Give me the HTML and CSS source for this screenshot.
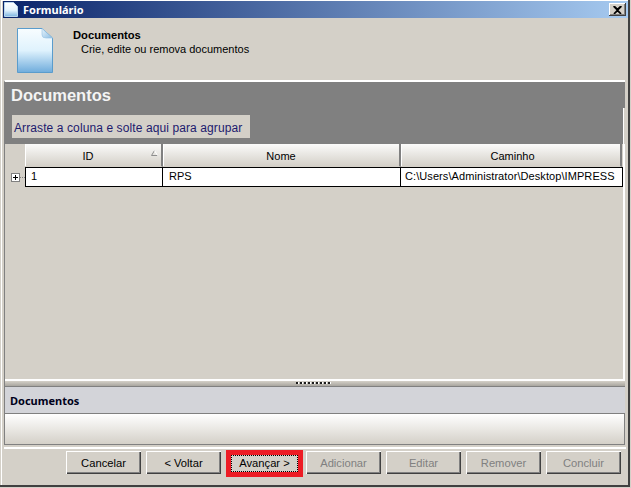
FILE: index.html
```html
<!DOCTYPE html>
<html lang="pt">
<head>
<meta charset="utf-8">
<title>Formulário</title>
<link rel="stylesheet" href="styles.css">
</head>
<body>
<div class="window">
  <div class="titlebar">
    <svg class="title-icon" width="14" height="15" viewBox="0 0 14 15"><defs><linearGradient id="tg" x1="0" y1="0" x2="0" y2="1"><stop offset="0" stop-color="#fff"/><stop offset=".55" stop-color="#e4f3fd"/><stop offset="1" stop-color="#7db4e0"/></linearGradient></defs><path d="M.5.5H9.5L13.5 4.5V14.5H.5Z" fill="url(#tg)" stroke="#b9d6ee"/></svg>
    <span class="title-text">Formulário</span>
    <span class="close"><svg width="9" height="8" viewBox="0 0 9 8"><path d="M1 0L4.5 3.2L8 0M1 8L4.5 4.8L8 8M.5.2L8 7.8M8.5.2L1 7.8" fill="none" stroke="#000" stroke-width="1.5"/></svg></span>
  </div>
  <div class="banner">
    <svg class="banner-icon" width="36" height="45" viewBox="0 0 36 45"><defs><linearGradient id="bg" x1="0" y1="0" x2="0" y2="1"><stop offset="0" stop-color="#f8fdff"/><stop offset=".5" stop-color="#dff2fd"/><stop offset="1" stop-color="#6facdc"/></linearGradient><linearGradient id="fg" x1="0" y1="0" x2="1" y2="1"><stop offset="0" stop-color="#e8f5fd"/><stop offset="1" stop-color="#8dbde2"/></linearGradient></defs><path d="M.5.5H25L35.5 10V44.5H.5Z" fill="url(#bg)" stroke="#5a9ccc"/><path d="M25 .5V7Q25 10 29 10H35.5Z" fill="url(#fg)" stroke="#93c1e3" stroke-width=".6"/></svg>
    <div class="banner-text">
      <div class="banner-title">Documentos</div>
      <div class="banner-sub">Crie, edite ou remova documentos</div>
    </div>
  </div>
  <div class="panel">
    <div class="grid-head">
      <h1 class="grid-title">Documentos</h1>
      <div class="group-box">Arraste a coluna e solte aqui para agrupar</div>
    </div>
    <div class="grid-body">
      <div class="row-head">
        <div class="col col-id head">ID<svg class="sort" width="7" height="6" viewBox="0 0 7 6"><path d="M3.5.5L.5 5.5H6.5" fill="none" stroke="#8e8e8e"/><path d="M3.5.5L6.5 5.5" fill="none" stroke="#fff"/></svg></div>
        <div class="col col-name head">Nome</div>
        <div class="col col-path head">Caminho</div>
      </div>
      <div class="row-data">
        <span class="expander"><svg width="9" height="9" viewBox="0 0 9 9"><rect x=".5" y=".5" width="8" height="8" fill="#fff" stroke="#808080"/><path d="M2 4.5H7M4.5 2V7" stroke="#000"/></svg></span>
        <div class="col col-id cell">1</div>
        <div class="col col-name cell">RPS</div>
        <div class="col col-path cell">C:\Users\Administrator\Desktop\IMPRESS</div>
      </div>
    </div>
    <div class="splitter"><span class="grip"></span></div>
    <div class="info-title">Documentos</div>
    <div class="info-body"></div>
  </div>
  <div class="footer">
    <button class="btn">Cancelar</button>
    <button class="btn">&lt; Voltar</button>
    <button class="btn btn-focus"><span class="focus-ring">Avançar &gt;</span></button>
    <button class="btn" disabled>Adicionar</button>
    <button class="btn" disabled>Editar</button>
    <button class="btn" disabled>Remover</button>
    <button class="btn" disabled>Concluir</button>
  </div>
</div>
</body>
</html>
```

FILE: styles.css
```css
* { box-sizing: border-box; }
html, body { margin: 0; padding: 0; }
body { width: 631px; height: 488px; overflow: hidden; background: #d4d0c8; font-family: "Liberation Sans", Arial, sans-serif; font-size: 11px; color: #000; }
.window { width: 630px; height: 487px; background: #d4d0c8; padding: 1px 0 0 3px; display: flex; flex-direction: column; border-right: 2px solid #404040; border-bottom: 2px solid #404040; box-shadow: inset 1px 0 0 #d4d0c8, inset 2px 0 0 #fff, inset 0 1px 0 #fff; }
.titlebar { height: 17px; flex: none; display: flex; align-items: center; padding: 0 2px 0 1px; background: linear-gradient(90deg, #0a246a, #a6caf0); color: #fff; }
.title-icon { flex: none; }
.title-text { margin-left: 5px; font: bold 11px "Noto Sans", "Liberation Sans", sans-serif; flex: 1; }
.close { width: 17px; height: 13px; background: #d4d0c8; display: flex; align-items: center; justify-content: center; box-shadow: inset -1px -1px 0 #404040, inset 1px 1px 0 #fff, inset -2px -2px 0 #808080; }
.banner { height: 62px; flex: none; display: flex; padding: 10px 0 0 14px; }
.banner-text { margin-left: 20px; }
.banner-title { font-weight: bold; font-size: 11.2px; line-height: 14px; }
.banner-sub { margin-left: 8px; line-height: 14px; }
.panel { flex: none; height: 365px; display: flex; flex-direction: column; margin: 0 3px 0 1px; border-top: 2px solid #fff; border-left: 1px solid #808080; }
.grid-head { height: 62px; flex: none; position: relative; background: #808080; padding: 3px 0 0 6px; }
.grid-head::after { content: ""; position: absolute; right: 0; bottom: 0; width: 2px; height: 36px; background: linear-gradient(90deg, #fff 1px, #d4d0c8 1px); }
.grid-title { margin: 0; font: bold 16.5px/20px "Liberation Sans", sans-serif; color: #f4f4f4; }
.group-box { margin: 10px 0 0 1px; width: 238px; height: 23px; background: #d4d0c8; color: #1d1a6e; font-size: 12px; letter-spacing: .1px; line-height: 27px; padding-left: 2px; white-space: nowrap; }
.grid-body { flex: 1; min-height: 0; background: #d4d0c8; padding-left: 20px; border-right: 2px solid #fff; border-right-color: #fff; }
.row-head, .row-data { display: flex; }
.col { flex: none; }
.col-id { width: 138px; }
.col-name { width: 238px; }
.col-path { width: 221px; }
.head { height: 23px; position: relative; text-align: center; line-height: 24px; background: linear-gradient(#fbfbfa, #d4d0c8); border-right: 2px solid #808080; box-shadow: inset 1px 0 0 #fff; border-bottom: 1px solid #d4d0c8; }
.head.col-id { padding-right: 10px; }
.head.col-path { padding-left: 4px; }
.sort { position: absolute; right: 3px; top: 6px; }
.row-data { height: 20px; position: relative; border: solid #000; border-width: 1px 0 1px 1px; width: 598px; background: #fff; line-height: 16px; }
.row-data .col-id { width: 137px; }
.cell { padding-left: 5px; border-right: 1px solid #000; white-space: nowrap; overflow: hidden; }
.row-data .col-name { padding-left: 6px; }
.row-data .col-path { width: 222px; padding-left: 4px; letter-spacing: .08px; }
.expander { position: absolute; left: -15px; top: 5px; display: flex; width: 14px; height: 9px; }
.expander::after { content: ""; position: absolute; left: 9px; top: 4px; width: 5px; border-top: 1px dotted #808080; }
.splitter { height: 6px; flex: none; background: linear-gradient(#d4d0c8, #a9a69f); border-bottom: 1px solid #808080; display: flex; justify-content: center; box-shadow: 0 -2px 0 #fff; }
.grip { width: 36px; height: 2px; margin: 1px 0 0 -2px; background: repeating-linear-gradient(90deg, #1c1c1c 0 2px, #fff 2px 3px, transparent 3px 4px); }
.info-title { height: 27px; flex: none; padding-left: 5px; background: #d3d4d9; border-bottom: 1px solid #808080; font: bold 11px/28px "Noto Sans", "Liberation Sans", sans-serif; color: #00001a; }
.info-body { height: 31px; flex: none; background: linear-gradient(#fff, #d4d0c8); border-bottom: 1px solid #808080; border-right: 1px solid #808080; }
.footer { flex: 1; margin: 2px 2px 0 1px; border-top: 2px solid #fff; display: flex; justify-content: flex-end; gap: 5px; padding: 2px 5px 0 0; align-items: flex-start; }
.btn { width: 75px; height: 23px; padding: 0; background: #d4d0c8; border: 0; font: 11.2px "Liberation Sans", sans-serif; color: #000; box-shadow: inset 1px 1px 0 #fff, inset -1px -1px 0 #404040, inset -2px -2px 0 #808080; }
.btn:disabled { color: #808080; }
.btn-focus { outline: 5px solid #ed1c24; outline-offset: -5px; box-shadow: none; width: 77px; height: 27px; margin: -1px -2px 0 0; padding: 5px; }
.focus-ring { display: block; height: 17px; line-height: 15px; border: 1px dotted #000; }
```
